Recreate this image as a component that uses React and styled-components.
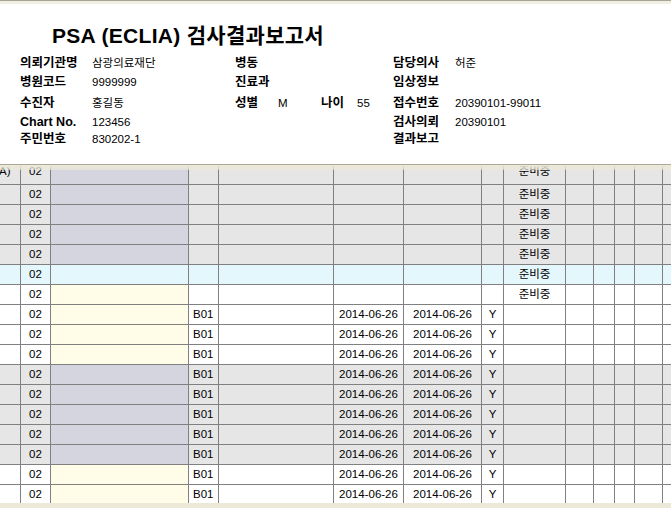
import React from "react";
import styled, { createGlobalStyle } from "styled-components";

const Global = createGlobalStyle`
  html, body { margin: 0; padding: 0; background: #ffffff; }
  body { font-family: "Liberation Sans", "Noto Sans CJK KR", sans-serif; color: #000; }
  * { box-sizing: border-box; }
`;

const Page = styled.div`
  width: 671px;
  height: 508px;
  display: flex;
  flex-direction: column;
  overflow: hidden;
  background: #ffffff;
`;

const TopEdge = styled.div`
  height: 4px;
  flex: none;
  border-top: 1px solid #a7a594;
  background: #f1efe4;
`;

const Header = styled.div`
  height: 160px;
  flex: none;
  padding: 20px 0 0 20px;
  background: #ffffff;
`;

const Title = styled.h1`
  margin: 0 0 0 32px;
  font-size: 21px;
  line-height: 24px;
  font-weight: bold;
  letter-spacing: 0.3px;
  white-space: nowrap;
`;

const Fields = styled.div`
  margin-top: 5px;
  display: grid;
  grid-template-columns: 72px 143px 43px 43px 36px 36px 62px 1fr;
  grid-template-rows: 19px 20px 22px 16px 18px;
`;

const Label = styled.span`
  display: flex;
  align-items: center;
  font-size: 12.5px;
  line-height: 14px;
  font-weight: bold;
  white-space: nowrap;
`;

const Value = styled.span`
  display: flex;
  align-items: center;
  font-size: 11.5px;
  line-height: 14px;
  white-space: nowrap;
`;

const GridFrame = styled.div`
  position: relative;
  flex: 1;
  border-top: 1px solid #aca899;
  overflow: hidden;
  background: #ffffff;
`;

const FrameShade = styled.div`
  position: absolute;
  left: 0;
  right: 0;
  top: 0;
  height: 5px;
  background: linear-gradient(#ece9d8, rgba(236, 233, 216, 0.6));
  pointer-events: none;
`;

const rowBg = { gray: "#e6e6e6", blue: "#e3f7fc", white: "#ffffff" };
const nameBg = { gray: "#d4d5de", blue: "#e3f7fc", white: "#fffde8" };

const Row = styled.div`
  display: grid;
  grid-template-columns: 21px 30px 138px 30px 115px 70px 78px 22px 62px 28px 21px 20px 28px 1fr;
  height: 20px;
  border-bottom: 1px solid #808080;
  background: ${(p) => rowBg[p.$tone]};
  line-height: ${(p) => (p.$scrolled ? "13px" : "19px")};
`;

const Cell = styled.div`
  border-right: 1px solid #808080;
  font-size: 11.5px;
  white-space: nowrap;
  overflow: hidden;
  text-align: ${(p) => p.$align || "center"};
  padding-left: ${(p) => (p.$align === "left" ? "4px" : "0")};
  background: ${(p) => p.$bg || "transparent"};
`;

const EdgeCell = styled(Cell)`
  text-align: left;
  padding-left: 0;
  text-indent: -1px;
`;

const LastCell = styled.div``;

const BottomEdge = styled.div`
  height: 5px;
  flex: none;
  background: #ece9d8;
`;

const fieldRows = [
  ["의뢰기관명", "삼광의료재단", "병동", "", "", "", "담당의사", "허준"],
  ["병원코드", "9999999", "진료과", "", "", "", "임상정보", ""],
  ["수진자", "홍길동", "성별", "M", "나이", "55", "접수번호", "20390101-99011"],
  ["Chart No.", "123456", "", "", "", "", "검사의뢰", "20390101"],
  ["주민번호", "830202-1", "", "", "", "", "결과보고", ""],
];

const rows = [
  { tone: "gray", edge: "A)", status: "준비중", scrolled: true },
  { tone: "gray", status: "준비중" },
  { tone: "gray", status: "준비중" },
  { tone: "gray", status: "준비중" },
  { tone: "gray", status: "준비중" },
  { tone: "blue", status: "준비중" },
  { tone: "white", status: "준비중" },
  { tone: "white", done: true },
  { tone: "white", done: true },
  { tone: "white", done: true },
  { tone: "gray", done: true },
  { tone: "gray", done: true },
  { tone: "gray", done: true },
  { tone: "gray", done: true },
  { tone: "gray", done: true },
  { tone: "white", done: true },
  { tone: "white", done: true },
];

export default function App() {
  return (
    <Page>
      <Global />
      <TopEdge />
      <Header>
        <Title>PSA (ECLIA) 검사결과보고서</Title>
        <Fields>
          {fieldRows.map((r, ri) =>
            r.map((t, ci) =>
              ci % 2 === 0 ? (
                <Label key={`${ri}-${ci}`}>{t}</Label>
              ) : (
                <Value key={`${ri}-${ci}`}>{t}</Value>
              )
            )
          )}
        </Fields>
      </Header>
      <GridFrame>
        {rows.map((r, i) => (
          <Row key={i} $tone={r.tone} $scrolled={r.scrolled}>
            <EdgeCell>{r.edge || ""}</EdgeCell>
            <Cell>02</Cell>
            <Cell $bg={nameBg[r.tone]} />
            <Cell $align="left">{r.done ? "B01" : ""}</Cell>
            <Cell />
            <Cell>{r.done ? "2014-06-26" : ""}</Cell>
            <Cell>{r.done ? "2014-06-26" : ""}</Cell>
            <Cell>{r.done ? "Y" : ""}</Cell>
            <Cell>{r.status || ""}</Cell>
            <Cell />
            <Cell />
            <Cell />
            <Cell />
            <LastCell />
          </Row>
        ))}
        <FrameShade />
      </GridFrame>
      <BottomEdge />
    </Page>
  );
}
